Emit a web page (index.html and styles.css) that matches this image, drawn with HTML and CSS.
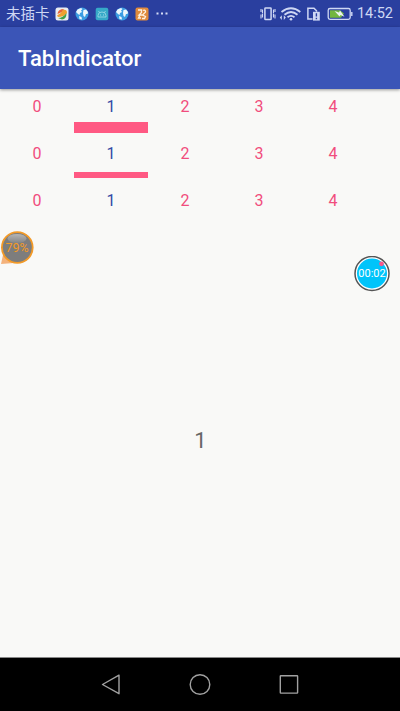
FILE: index.html
```html
<!DOCTYPE html>
<html lang="en">
<head>
<meta charset="utf-8">
<title>TabIndicator</title>
<link rel="stylesheet" href="styles.css">
</head>
<body>
<div class="screen">
  <header class="status">
    <span class="carrier">未插卡</span>
    <div class="notes">
      <svg width="14" height="14" viewBox="0 0 14 14"><rect x=".5" y=".5" width="13" height="13" rx="2.5" fill="#e9edf2"/><path d="M2.500 7Q3 2 9 2L7 5Z" fill="#e6653b"/><path d="M2 8.500Q6 7 8 3Q12 2 12 6Q9 10 3 10Z" fill="#f0a030"/><path d="M3 11Q8 11 11.500 6Q11.500 12 7 12.500Z" fill="#42a047"/></svg>
      <svg width="14" height="14" viewBox="0 0 14 14"><use href="#globe"/></svg>
      <svg width="14" height="14" viewBox="0 0 14 14"><rect x=".7" y=".7" width="12.6" height="12.6" rx="2" fill="#36a9c8"/><path d="M3 10V8.500a4 3.500 0 0 1 8 0V10ZM4.500 5.500 3.500 4M9.500 5.500 10.500 4" fill="none" stroke="#a2dce8" stroke-width=".8"/><path d="M5.200 8h.9M8 8h.9" stroke="#d5f3f6" stroke-width=".8"/></svg>
      <svg width="14" height="14" viewBox="0 0 14 14"><g id="globe"><circle cx="7" cy="7" r="6.500" fill="#3c9ce2"/><path d="M1 5 2.500 2.500 6 1 7.500 2 6 3.500 7 5 5 6 4.500 8 3 7ZM8.500 3 11 2.500 13 5 12.500 7 11 7 10 10 8.500 9 8 6ZM4 9 6.500 10 7 12.500 4.500 12Z" fill="#eef7fc"/></g></svg>
      <svg width="14" height="14" viewBox="0 0 14 14"><rect x=".5" y=".5" width="13" height="13" rx="2" fill="#df8a3c"/><path d="M3 3h3.500v2.500L4 8h3M5 8 3.500 11H6M8 3.500a1.500 1.500 0 1 1 1.500 2.500L7.500 8l3 1.500-1 2H7" fill="none" stroke="#fff1df" stroke-width="1.300"/></svg>
    </div>
    <svg class="more" width="12" height="4" viewBox="0 0 12 4"><path d="M.5 .6h2v1.900h-2zM5 .6h2v1.900H5zM9.500 .6h2v1.900h-2z" fill="#d4dcf5"/></svg>
    <svg class="system" width="94" height="20" viewBox="0 0 94 20" fill="none" stroke="#cfd8f4">
      <rect x="4.900" y="3.900" width="6.200" height="11.600" rx=".6" stroke-width="1.500"/>
      <path d="M2.500 5.500v3.500M1 5v3M1 10.500v4M2.500 9.500v4M13.500 5.500v3.500M15 5v3M15 10.500v4M13.500 9.500v4" stroke-width="1.100"/>
      <path d="M21.500 8Q31 .6 40.300 8M24.500 10.800Q31 5.300 37.500 10.800M27.500 13.300Q31 10.600 34.500 13.300" stroke-width="1.800"/>
      <circle cx="31" cy="15.200" r="1.300" fill="#cfd8f4" stroke="none"/>
      <path d="M19.800 13.600l2-2.300v4.600zM25.800 13.600l-2-2.300v4.600z" fill="#cfd8f4" stroke="none"/>
      <path d="M52.500 15h-4.600V4.200H54l2.500 2.500v1" stroke-width="1.500"/>
      <rect x="53" y="7.800" width="6.800" height="8.800" fill="#cfd8f4" stroke="none"/>
      <path d="M56.400 9.300v3.200M56.400 13.800v1.400" stroke="#2a3f9f" stroke-width="1.400"/>
      <rect x="68.200" y="4.500" width="22" height="10.900" rx="1.800" stroke-width="1.300"/>
      <path d="M70 6.200H80l4 3.300-3 4.200H70z" fill="#73b63f" stroke="none"/>
      <path d="M74.500 7l4.500 1.500 1-2 4.500 6.300-4-1.800-1 1.500z" fill="#eaf2ef" stroke="none"/>
      <path d="M91.800 8v4" stroke-width="1.400"/>
    </svg>
    <span class="clock">14:52</span>
  </header>
  <div class="appbar"><h1>TabIndicator</h1></div>
  <main class="content">
    <nav class="tabs thick"><span>0</span><span class="active">1</span><span>2</span><span>3</span><span>4</span></nav>
    <nav class="tabs thin"><span>0</span><span class="active">1</span><span>2</span><span>3</span><span>4</span></nav>
    <nav class="tabs"><span>0</span><span class="active">1</span><span>2</span><span>3</span><span>4</span></nav>
    <section class="page">1</section>
    <div class="battery">
      <svg width="36" height="36" viewBox="0 0 36 36"><defs><linearGradient id="shine" x2="0" y2="1"><stop offset="0" stop-color="#b5b5b5"/><stop offset="1" stop-color="#858585"/></linearGradient></defs><path d="M1 34 3 25 14 33Z" fill="#f4b27b"/><circle cx="17.300" cy="17.500" r="15.400" fill="#7d7d7d" stroke="#f39a27" stroke-width="1.800"/><ellipse cx="17" cy="8.500" rx="9.500" ry="4.500" fill="url(#shine)"/></svg>
      <span>79%</span>
    </div>
    <div class="recorder">
      <svg width="36" height="36" viewBox="0 0 36 36"><circle cx="18" cy="17.500" r="17" fill="#fff" stroke="#555" stroke-width="1.500"/><circle cx="18" cy="17.500" r="15" fill="#00c4fa"/><circle cx="27.500" cy="7.800" r="2.400" fill="#f8588c"/></svg>
      <span>00:02</span>
    </div>
  </main>
  <footer class="navbar">
    <svg width="22" height="22" viewBox="0 0 22 22"><path d="M2.500 11.500 19 2.200V20.700Z"/></svg>
    <svg width="22" height="22" viewBox="0 0 22 22"><circle cx="11" cy="11.500" r="9.800"/></svg>
    <svg width="22" height="22" viewBox="0 0 22 22"><rect x="2.300" y="2.800" width="17.300" height="17.300" rx=".5"/></svg>
  </footer>
</div>
</body>
</html>
```
FILE: styles.css
```css
* { box-sizing: border-box; }
body { margin: 0; font-family: Roboto, "Noto Sans CJK SC", sans-serif; }
.screen { width: 400px; height: 711px; display: flex; flex-direction: column; background: #f9f9f7; overflow: hidden; }
svg { display: block; flex: none; }
.status { height: 27px; flex: none; display: flex; align-items: center; padding: 0 7px 0 6px; background: #2a3f9f; color: #cfd8f4; white-space: nowrap; }
.carrier { width: 49px; font-size: 14.500px; line-height: 20px; padding-top: 3px; }
.notes { display: flex; gap: 6px; }
.more { margin-left: 7px; }
.system { margin-left: 92px; }
.clock { margin-left: auto; font-size: 14.500px; line-height: 20px; padding-top: 1px; }
.appbar { height: 62px; flex: none; display: flex; align-items: center; padding: 2px 18px 0; background: #3b55b7; color: #fff; box-shadow: 0 1px 3px rgba(0,0,0,.4); z-index: 1; }
h1 { margin: 0; font-size: 22px; font-weight: 500; line-height: 28px; }
.content { flex: 1; display: flex; flex-direction: column; position: relative; }
.tabs { height: 47px; flex: none; display: grid; grid-template-columns: repeat(5, 74px); font-size: 16px; line-height: 35px; text-align: center; color: #f14d7d; }
.tabs .active { color: #3349a5; }
.active::after { content: ""; display: block; background: #ff5983; }
.thick .active::after { height: 11px; margin-top: -2px; }
.thin .active::after { height: 6px; margin-top: 1px; }
.page { flex: 1; display: flex; justify-content: center; padding: 197px 0 0 1px; font-size: 22px; line-height: 28px; color: #666; }
.battery, .recorder { position: absolute; width: 36px; height: 36px; }
.battery { left: 0; top: 141px; color: #f39a27; font-size: 12.500px; }
.recorder { left: 354px; top: 167px; color: #fff; font-size: 11px; }
.battery span, .recorder span { position: absolute; inset: 0; line-height: 36px; text-align: center; }
.battery span { right: 2px; }
.navbar { height: 54px; flex: none; display: flex; justify-content: center; gap: 67px; padding-top: 15px; background: #000; border-top: 1px solid #888; }
.navbar path, .navbar circle, .navbar rect { fill: none; stroke: #a1a1a1; stroke-width: 1.400; stroke-linejoin: round; }
```
